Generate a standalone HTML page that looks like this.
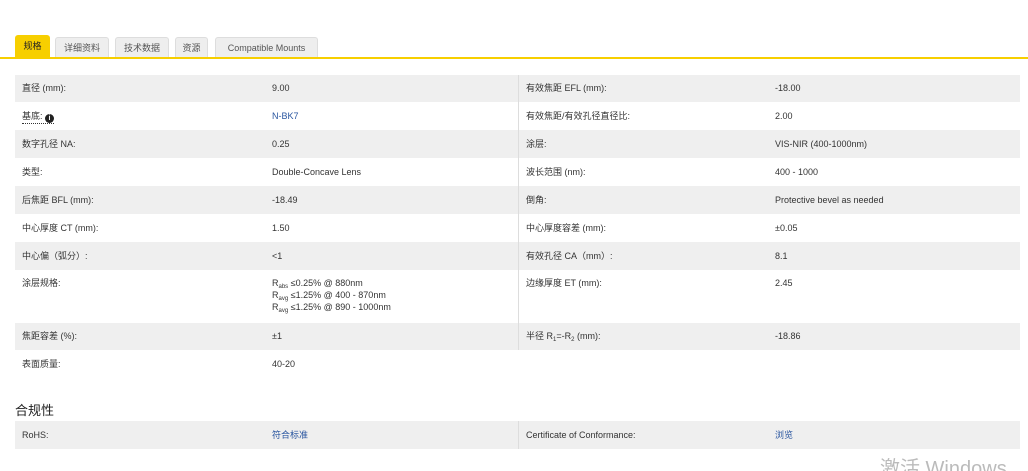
<!DOCTYPE html>
<html style="height:471px;overflow:hidden"><head><meta charset="utf-8"><style>
body{margin:0;width:1028px;height:471px;background:#fff;font-family:"Liberation Sans","Noto Sans CJK SC",sans-serif;font-size:9px;color:#333;position:relative;overflow:hidden}
.tabs{position:absolute;left:15px;top:35px;height:23px}
.tab{position:absolute;top:2px;height:20px;background:#eee;border:1px solid #ddd;border-bottom:none;border-radius:3px 3px 0 0;font-size:9px;line-height:21px;text-align:center;color:#555}
.tab.act{background:#f7cf00;border-color:#f7cf00;top:0;height:23px;color:#222}
.line{position:absolute;left:0;top:57px;width:1028px;height:2px;background:#f7cf00}
.row{position:absolute;left:15px;width:1005px}
.g{background:#efefef}
.row span{position:absolute;top:0}
.c1{left:7px}.c2{left:257px}.c3{left:511px}.c4{left:760px}
.sep{position:absolute;left:503px;top:0;bottom:0;width:1px;background:#ddd}
.b{color:#2a56a0}
sub{font-size:6px;line-height:0;vertical-align:-2px}
.i{display:inline-block;width:9px;height:9px;border-radius:50%;background:#222;color:#fff;font-size:7px;line-height:9px;text-align:center;font-weight:bold;vertical-align:-1px}
</style></head><body>
<div class="tabs">
<div class="tab act" style="left:0;width:33px">规格</div>
<div class="tab" style="left:40px;width:52px">详细资料</div>
<div class="tab" style="left:100px;width:52px">技术数据</div>
<div class="tab" style="left:160px;width:31px">资源</div>
<div class="tab" style="left:200px;width:101px">Compatible Mounts</div>
</div>
<div class="line"></div>

<div class="row g" style="top:75px;height:27px;line-height:27px"><span class="c1">直径 (mm):</span><span class="c2">9.00</span><div class="sep"></div><span class="c3">有效焦距 EFL (mm):</span><span class="c4">-18.00</span></div>
<div class="row" style="top:102px;height:28px;line-height:28px"><span class="c1" style="border-bottom:1px dotted #333;line-height:12px;top:8px">基底: <span class="i" style="position:static">i</span></span><span class="c2 b">N-BK7</span><div class="sep"></div><span class="c3">有效焦距/有效孔径直径比:</span><span class="c4">2.00</span></div>
<div class="row g" style="top:130px;height:28px;line-height:28px"><span class="c1">数字孔径 NA:</span><span class="c2">0.25</span><div class="sep"></div><span class="c3">涂层:</span><span class="c4">VIS-NIR (400-1000nm)</span></div>
<div class="row" style="top:158px;height:28px;line-height:28px"><span class="c1">类型:</span><span class="c2">Double-Concave Lens</span><div class="sep"></div><span class="c3">波长范围 (nm):</span><span class="c4">400 - 1000</span></div>
<div class="row g" style="top:186px;height:28px;line-height:28px"><span class="c1">后焦距 BFL (mm):</span><span class="c2">-18.49</span><div class="sep"></div><span class="c3">倒角:</span><span class="c4">Protective bevel as needed</span></div>
<div class="row" style="top:214px;height:28px;line-height:28px"><span class="c1">中心厚度 CT (mm):</span><span class="c2">1.50</span><div class="sep"></div><span class="c3">中心厚度容差 (mm):</span><span class="c4">±0.05</span></div>
<div class="row g" style="top:242px;height:28px;line-height:28px"><span class="c1">中心偏（弧分）:</span><span class="c2">&lt;1</span><div class="sep"></div><span class="c3">有效孔径 CA（mm）:</span><span class="c4">8.1</span></div>
<div class="row" style="top:270px;height:53px;line-height:13px"><span class="c1" style="top:7px">涂层规格:</span><span class="c2" style="top:7px;line-height:12px">R<sub>abs</sub> ≤0.25% @ 880nm<br>R<sub>avg</sub> ≤1.25% @ 400 - 870nm<br>R<sub>avg</sub> ≤1.25% @ 890 - 1000nm</span><div class="sep"></div><span class="c3" style="top:7px">边缘厚度 ET (mm):</span><span class="c4" style="top:7px">2.45</span></div>
<div class="row g" style="top:323px;height:27px;line-height:27px"><span class="c1">焦距容差 (%):</span><span class="c2">±1</span><div class="sep"></div><span class="c3">半径 R<sub>1</sub>=-R<sub>2</sub> (mm):</span><span class="c4">-18.86</span></div>
<div class="row" style="top:350px;height:28px;line-height:28px"><span class="c1">表面质量:</span><span class="c2">40-20</span></div>

<div style="position:absolute;left:15px;top:400px;font-size:13px;color:#222">合规性</div>
<div class="row g" style="top:421px;height:28px;line-height:28px"><span class="c1">RoHS:</span><span class="c2 b">符合标准</span><div class="sep"></div><span class="c3">Certificate of Conformance:</span><span class="c4 b">浏览</span></div>
<div style="position:absolute;left:880px;top:457px;font-size:20px;line-height:24px;color:#bbb">激活 Windows</div>
</body></html>
